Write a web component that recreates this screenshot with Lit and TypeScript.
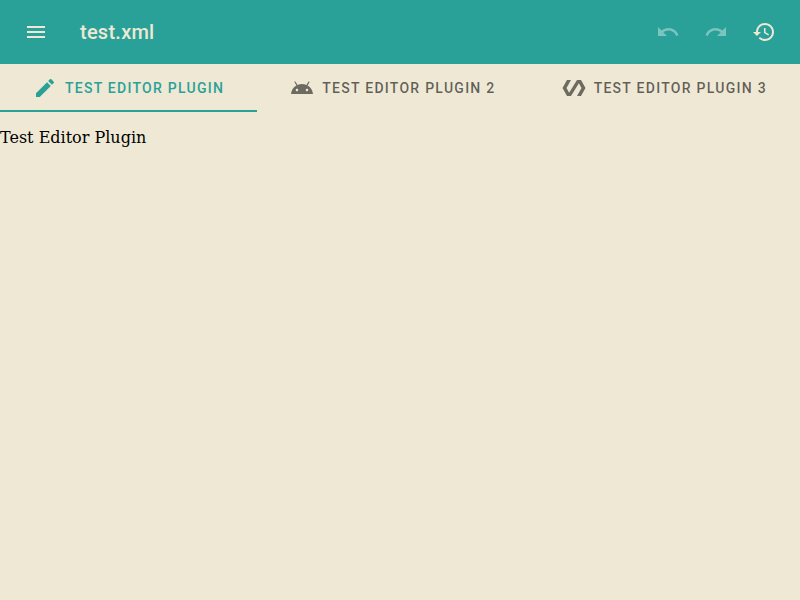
import { LitElement, html, css, svg } from "lit";
import { customElement, state } from "lit/decorators.js";
import { classMap } from "lit/directives/class-map.js";

const icons = {
  menu: "M3 18h18v-2H3v2zm0-5h18v-2H3v2zm0-7v2h18V6H3z",
  undo: "M12.5 8c-2.65 0-5.05.99-6.9 2.6L2 7v9h9l-3.62-3.62c1.39-1.16 3.16-1.88 5.12-1.88 3.54 0 6.55 2.31 7.6 5.5l2.37-.78C21.08 11.03 17.15 8 12.5 8z",
  redo: "M18.4 10.6C16.55 8.99 14.15 8 11.5 8c-4.65 0-8.58 3.03-9.96 7.22L3.9 16c1.05-3.19 4.05-5.5 7.6-5.5 1.95 0 3.73.72 5.12 1.88L13 16h9V7l-3.6 3.6z",
  history: "M13 3c-4.97 0-9 4.03-9 9H1l3.89 3.89.07.14L9 12H6c0-3.87 3.13-7 7-7s7 3.13 7 7-3.13 7-7 7c-1.93 0-3.68-.79-4.94-2.06l-1.42 1.42C8.27 19.99 10.51 21 13 21c4.97 0 9-4.03 9-9s-4.03-9-9-9zm-1 5v5l4.28 2.54.72-1.21-3.5-2.08V8H12z",
  edit: "M3 17.25V21h3.75L17.81 9.94l-3.75-3.75L3 17.25zM20.71 7.04c.39-.39.39-1.02 0-1.41l-2.34-2.34c-.39-.39-1.02-.39-1.41 0l-1.83 1.83 3.75 3.75 1.83-1.83z",
  android: "M17.6 9.48l1.84-3.18c.16-.31.04-.69-.26-.85-.29-.15-.65-.06-.83.22l-1.88 3.24c-2.86-1.21-6.08-1.21-8.94 0L5.65 5.67c-.19-.29-.58-.38-.87-.2-.28.18-.37.54-.22.83L6.4 9.48C3.3 11.25 1.28 14.44 1 18h22c-.28-3.56-2.3-6.75-5.4-8.52zM7 15.25c-.69 0-1.25-.56-1.25-1.25s.56-1.25 1.25-1.25 1.25.56 1.25 1.25-.56 1.25-1.25 1.25zm10 0c-.69 0-1.25-.56-1.25-1.25s.56-1.25 1.25-1.25 1.25.56 1.25 1.25-.56 1.25-1.25 1.25z",
  polymer: "M19 4h-4L7.11 16.63 4.5 12 9 4H5L.5 12 5 20h4l7.89-12.63L19.5 12 15 20h4l4.5-8z",
};

const icon = (name: keyof typeof icons) =>
  html`<svg class="icon" viewBox="0 0 24 24" aria-hidden="true">${svg`<path d=${icons[name]}></path>`}</svg>`;

const plugins: { label: string; icon: keyof typeof icons }[] = [
  { label: "Test Editor Plugin", icon: "edit" },
  { label: "Test Editor Plugin 2", icon: "android" },
  { label: "Test Editor Plugin 3", icon: "polymer" },
];

@customElement("app-root")
export class AppRoot extends LitElement {
  static styles = css`
    :host {
      display: block;
      min-height: 100vh;
      background: #eee8d5;
      color: #000;
    }
    button {
      border: 0;
      margin: 0;
      background: none;
      color: inherit;
      cursor: pointer;
    }
    .icon {
      display: block;
      flex: none;
      width: 24px;
      height: 24px;
      fill: currentColor;
    }
    .bar {
      display: flex;
      align-items: center;
      box-sizing: border-box;
      height: 64px;
      padding: 8px 12px;
      background: #2aa198;
      color: #eee8d5;
    }
    .action {
      width: 48px;
      height: 48px;
      padding: 12px;
    }
    .action:disabled {
      color: rgba(255, 255, 255, 0.38);
      cursor: default;
    }
    .title {
      flex: 1;
      padding-left: 20px;
      font: 500 20px/32px Roboto, sans-serif;
      letter-spacing: 0.25px;
    }
    .tabs {
      display: flex;
      height: 48px;
    }
    .tab {
      flex: 1 0 auto;
      display: flex;
      justify-content: center;
      align-items: center;
      gap: 8px;
      box-sizing: border-box;
      padding: 2px 24.1px 0 23.9px;
      border-bottom: 2px solid transparent;
      color: rgba(0, 0, 0, 0.6);
      font: 500 14px/20px Roboto, sans-serif;
      letter-spacing: 1.265px;
      text-transform: uppercase;
      white-space: nowrap;
    }
    .tab .icon {
      color: rgba(0, 0, 0, 0.54);
    }
    .tab.active,
    .tab.active .icon {
      color: #2aa198;
    }
    .tab.active {
      border-bottom-color: #2aa198;
    }
    .content {
      margin: 0;
      padding-top: 16px;
      font: 16px "DejaVu Serif", serif;
    }
  `;

  @state() private selected = 0;

  render() {
    return html`
      <header class="bar">
        <button class="action" aria-label="Menu">${icon("menu")}</button>
        <div class="title">test.xml</div>
        <button class="action" aria-label="Undo" disabled>${icon("undo")}</button>
        <button class="action" aria-label="Redo" disabled>${icon("redo")}</button>
        <button class="action" aria-label="History">${icon("history")}</button>
      </header>
      <nav class="tabs" role="tablist">
        ${plugins.map(
          (plugin, i) => html`<button
            role="tab"
            class=${classMap({ tab: true, active: i === this.selected })}
            @click=${() => (this.selected = i)}
          >${icon(plugin.icon)}<span>${plugin.label}</span></button>`
        )}
      </nav>
      <p class="content">${plugins[this.selected].label}</p>
    `;
  }
}
